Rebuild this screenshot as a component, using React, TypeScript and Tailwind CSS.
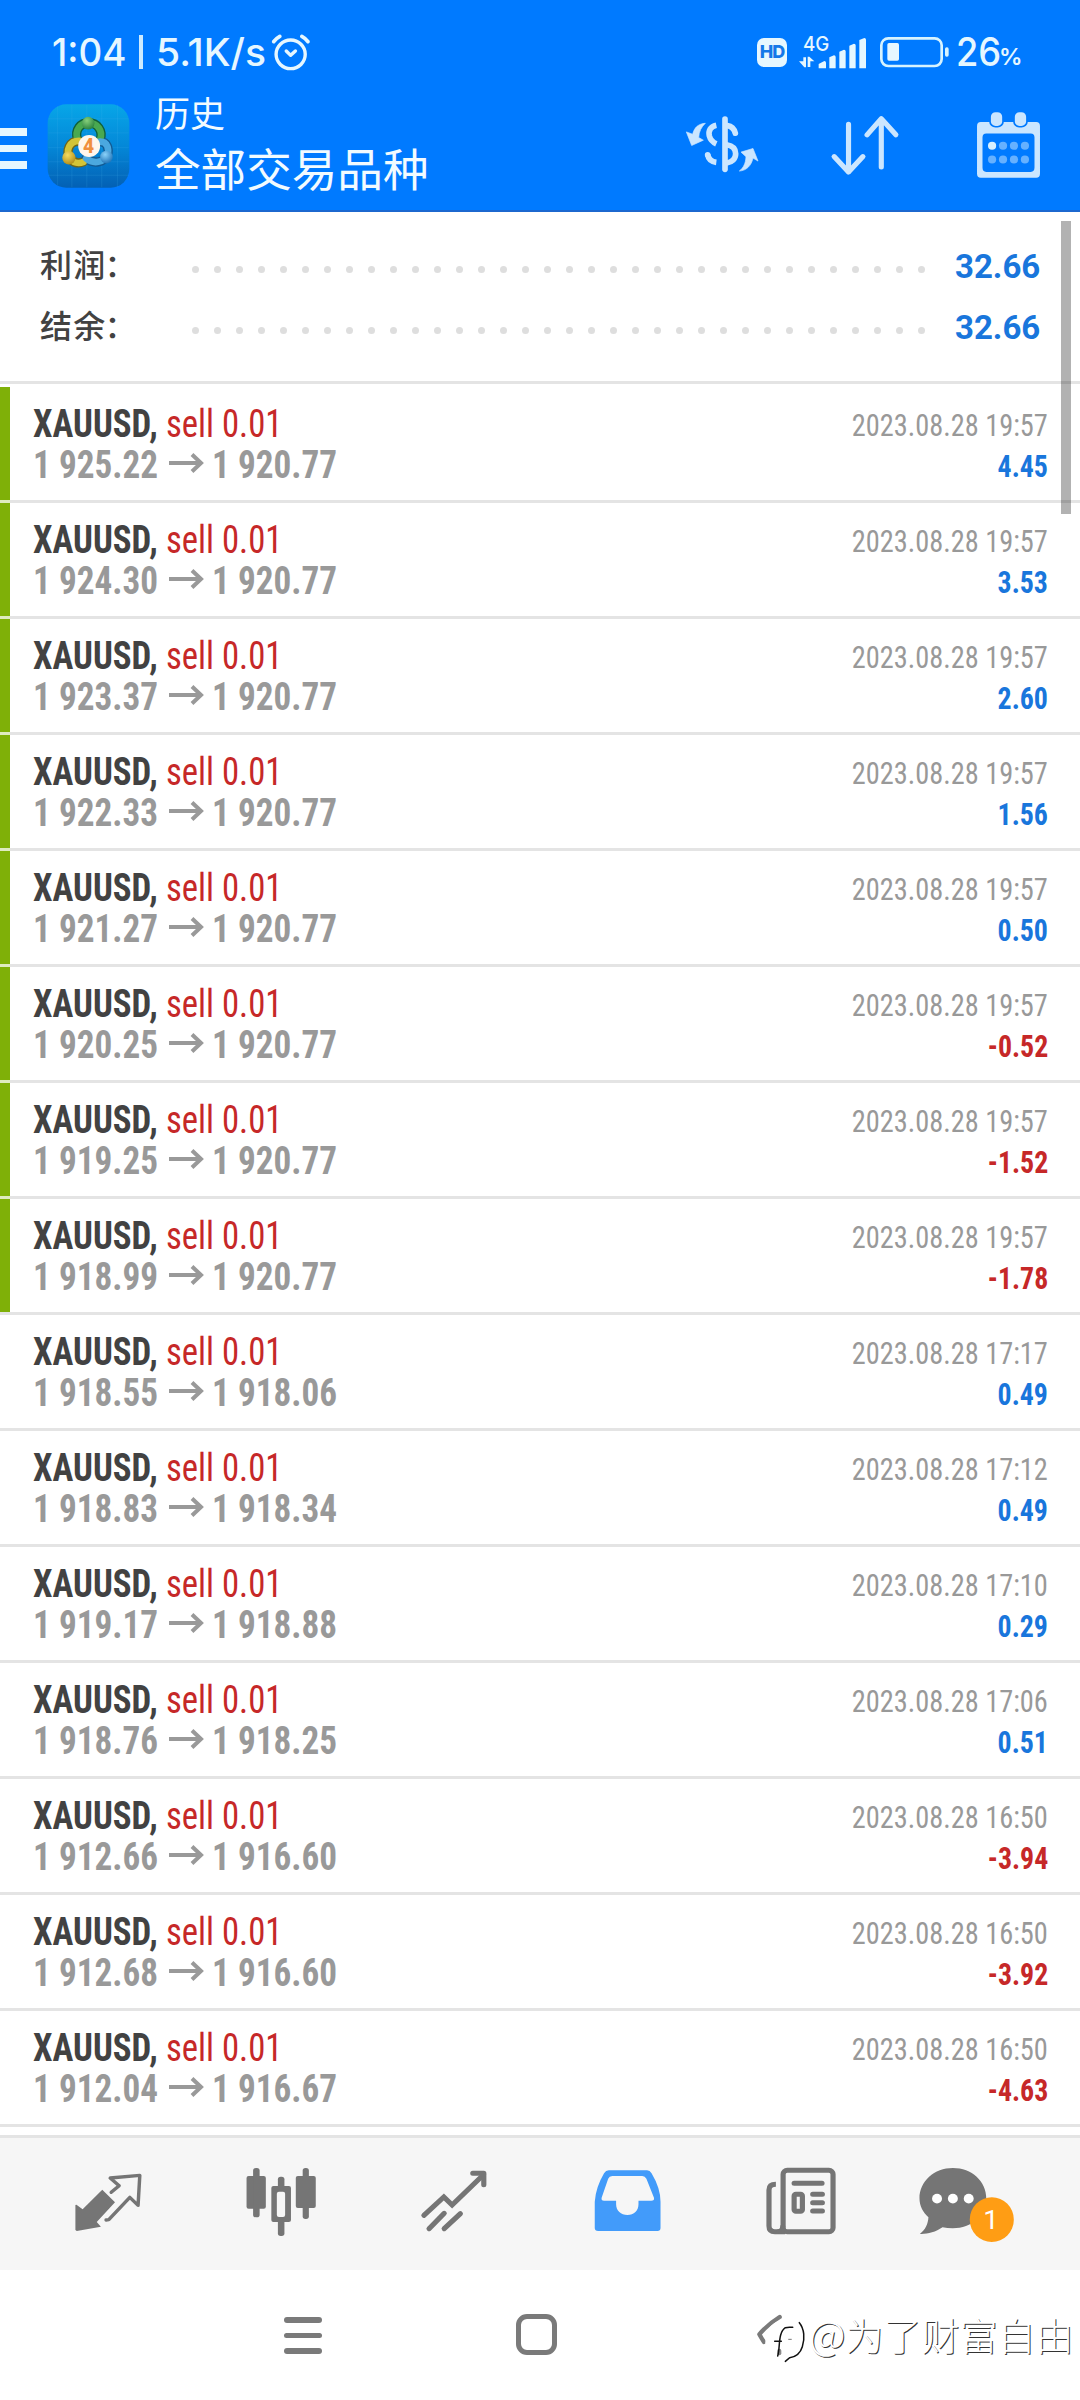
import type { ReactNode } from "react";

type Deal = { from: string; to: string; time: string; profit: string; marked?: boolean };

const deals: Deal[] = [
  { from: "1 925.22", to: "1 920.77", time: "2023.08.28 19:57", profit: "4.45", marked: true },
  { from: "1 924.30", to: "1 920.77", time: "2023.08.28 19:57", profit: "3.53", marked: true },
  { from: "1 923.37", to: "1 920.77", time: "2023.08.28 19:57", profit: "2.60", marked: true },
  { from: "1 922.33", to: "1 920.77", time: "2023.08.28 19:57", profit: "1.56", marked: true },
  { from: "1 921.27", to: "1 920.77", time: "2023.08.28 19:57", profit: "0.50", marked: true },
  { from: "1 920.25", to: "1 920.77", time: "2023.08.28 19:57", profit: "-0.52", marked: true },
  { from: "1 919.25", to: "1 920.77", time: "2023.08.28 19:57", profit: "-1.52", marked: true },
  { from: "1 918.99", to: "1 920.77", time: "2023.08.28 19:57", profit: "-1.78", marked: true },
  { from: "1 918.55", to: "1 918.06", time: "2023.08.28 17:17", profit: "0.49" },
  { from: "1 918.83", to: "1 918.34", time: "2023.08.28 17:12", profit: "0.49" },
  { from: "1 919.17", to: "1 918.88", time: "2023.08.28 17:10", profit: "0.29" },
  { from: "1 918.76", to: "1 918.25", time: "2023.08.28 17:06", profit: "0.51" },
  { from: "1 912.66", to: "1 916.60", time: "2023.08.28 16:50", profit: "-3.94" },
  { from: "1 912.68", to: "1 916.60", time: "2023.08.28 16:50", profit: "-3.92" },
  { from: "1 912.04", to: "1 916.67", time: "2023.08.28 16:50", profit: "-4.63" },
];

function StatusBar() {
  return (
    <div className="flex h-[88px] items-center pt-[16px] font-['Inter',sans-serif] text-[38px] leading-[40px] font-medium text-[#e6f7ff]">
      <span className="ml-[52px] w-[86px] origin-left scale-x-[0.969]">1:04</span>
      <span className="ml-px h-[34px] w-[4px] bg-[#cdebff]" />
      <span className="ml-[13px] w-[115px] origin-left scale-x-[1.027]">5.1K/s</span>
      <svg className="h-[38px] w-[40px]" viewBox="788 98 118 114" preserveAspectRatio="none" fill="none" stroke="#e6f7ff" strokeWidth="10" strokeLinecap="round" strokeLinejoin="round">
        <circle cx="846" cy="162" r="43" />
        <path d="M833 152l13 13 14-13" />
        <path d="M796 124q7-10 18-16M879 108q11 6 18 16" strokeWidth="11" />
      </svg>
      <span className="ml-[446px] flex h-[29px] w-[30px] items-center justify-center rounded-[7px] bg-[#e6f7ff] text-[18px] leading-none font-extrabold tracking-[-1px] text-[#1478e8]">
        HD
      </span>
      <svg className="mb-[4px] ml-[12px] h-[40px] w-[68px]" viewBox="180 16 204 120" preserveAspectRatio="none" fill="#e6f7ff">
        <text x="192" y="79" fontSize="60" fontWeight="500" textLength="79" lengthAdjust="spacingAndGlyphs">4G</text>
        <path d="M180 110l13 0V98h8v30h-5zM226 110h-12v17h-8V96h5z" />
        <path d="M239 118l17-9q5 0 5 5v17h-22zM271 98l14-6q5 0 5 5v34h-19zM301 81l14-6q5 0 5 5v51h-19zM331 63l14-6q5 0 5 5v69h-19zM361 46l15-6q5 0 5 5v86h-20z" />
      </svg>
      <svg className="ml-[12px] h-[32px] w-[72px]" viewBox="420 36 216 96" preserveAspectRatio="none">
        <rect x="427" y="43" width="181" height="83" rx="21" fill="none" stroke="#d6f3ff" strokeWidth="8" />
        <rect x="445" y="57" width="35" height="53" rx="5" fill="#e6f7ff" />
        <rect x="618" y="70" width="11" height="28" rx="5" fill="#d6f3ff" />
      </svg>
      <span className="ml-[5px] w-[43px] origin-left scale-x-[0.93] text-[39px]">26</span>
      <span className="origin-left scale-x-[1.02] pt-[11px] text-[23px] leading-none font-semibold">%</span>
    </div>
  );
}

function AppLogo() {
  return (
    <svg className="ml-[20px] mt-[16px] h-[84px] w-[83px]" viewBox="20 28 250 250" preserveAspectRatio="none">
      <defs>
        <linearGradient id="tile" x1="0" y1="0" x2="0" y2="1">
          <stop offset="0" stopColor="#07a6e8" />
          <stop offset="0.5" stopColor="#0488d8" />
          <stop offset="1" stopColor="#0360b4" />
        </linearGradient>
        <radialGradient id="green" cx="0.4" cy="0.3" r="0.8"><stop offset="0" stopColor="#86d07a" /><stop offset="1" stopColor="#1f7a38" /></radialGradient>
        <radialGradient id="gold" cx="0.4" cy="0.3" r="0.8"><stop offset="0" stopColor="#f5dc60" /><stop offset="1" stopColor="#a98412" /></radialGradient>
        <radialGradient id="sky" cx="0.4" cy="0.3" r="0.8"><stop offset="0" stopColor="#8ad2fa" /><stop offset="1" stopColor="#1469b0" /></radialGradient>
      </defs>
      <rect x="22" y="29" width="246" height="248" rx="56" fill="url(#tile)" />
      <path d="M52 34v236M95 30v246M140 30v246M185 30v246M232 30v246M24 72h242M24 114h242M24 158h242M24 200h242M24 240h242" stroke="#4fb9ee" strokeOpacity="0.25" strokeWidth="2" />
      <g fill="none" strokeLinecap="round">
        <path d="M112 134C102 104 122 84 145 84C172 84 190 108 180 134" stroke="#10603a" strokeWidth="28" />
        <path d="M116 138C88 138 76 166 88 188C98 204 116 206 130 200" stroke="#6b651c" strokeWidth="28" />
        <path d="M180 140C202 140 208 162 202 180C192 202 160 208 138 190" stroke="#125a92" strokeWidth="28" />
        <path d="M112 134C102 104 122 84 145 84C172 84 190 108 180 134" stroke="#49a950" strokeWidth="20" />
        <path d="M116 138C88 138 76 166 88 188C98 204 116 206 130 200" stroke="#d3c437" strokeWidth="20" />
        <path d="M180 140C202 140 208 162 202 180C192 202 160 208 138 190" stroke="#4ba8df" strokeWidth="20" />
      </g>
      <circle cx="144" cy="85" r="19" fill="url(#green)" />
      <circle cx="86" cy="188" r="20" fill="url(#gold)" />
      <circle cx="199" cy="186" r="19" fill="url(#sky)" />
      <circle cx="147" cy="153" r="33" fill="#fff6ec" />
      <text x="145" y="174" textAnchor="middle" fontSize="58" fontWeight="800" fontFamily="Roboto, sans-serif" fill="#f08f3e">4</text>
    </svg>
  );
}

function Toolbar() {
  return (
    <div className="flex h-[124px] items-start border-b-2 border-[#1c68cf]">
      <div className="mt-[40px] flex w-[27px] flex-col gap-[9px]">
        <span className="h-[7.5px] bg-[#e6f7ff]" />
        <span className="h-[7.5px] bg-[#e6f7ff]" />
        <span className="h-[7.5px] bg-[#e6f7ff]" />
      </div>
      <AppLogo />
      <div className="ml-[25px] pt-[6px] font-['Noto_Sans_CJK_SC',sans-serif] whitespace-nowrap text-[#f2fbff]">
        <div className="text-[35px] leading-[36px]">历史</div>
        <div className="mt-[12px] text-[45.6px] leading-[50px]">全部交易品种</div>
      </div>
      <svg className="mt-[27px] ml-auto h-[58px] w-[75px]" viewBox="15 45 225 175" preserveAspectRatio="none" fill="none" stroke="#cbe6ff" strokeWidth="17">
        <path d="M135 57V209" strokeLinecap="round" />
        <path d="M109 76C90 80 85 93 88 108C91 120 100 128 109 132M109 188C93 186 85 178 83 164" />
        <path d="M83 166v-1M142 77C156 79 163 88 166 100" strokeLinecap="round" />
        <path d="M140 135C158 138 167 148 167 162C167 177 156 187 140 190" />
        <path d="M76 70C55 72 43 82 38 103L19 96L35 137L70 121L56 113C57 95 64 81 76 70Z" fill="#cbe6ff" stroke="#cbe6ff" strokeWidth="2" />
        <path d="M178 214C191 204 197 190 198 171L183 157L219 146L234 184L219 175C214 198 199 213 178 214Z" fill="#cbe6ff" stroke="#cbe6ff" strokeWidth="2" />
      </svg>
      <svg className="mt-[27px] ml-[70px] h-[61px] w-[70px]" viewBox="842 345 204 182" preserveAspectRatio="none" fill="none" stroke="#cbe6ff" strokeWidth="15" strokeLinecap="round" strokeLinejoin="round">
        <path d="M896 373V515M854 469L896 515L938 469M991.5 500V356M950 404L991.5 356L1034 404" />
      </svg>
      <svg className="mt-[23px] mr-[39px] ml-[76px] h-[67px] w-[65px]" viewBox="1265 333 190 200" preserveAspectRatio="none">
        <path fillRule="evenodd" fill="#cbe6ff" d="M1279 366H1441Q1452 366 1452 378V520Q1452 532 1441 532H1279Q1268 532 1268 520V378Q1268 366 1279 366ZM1295 400Q1284 400 1284 412V502Q1284 515 1295 515H1425Q1436 515 1436 502V412Q1436 400 1425 400Z" />
        <rect x="1306" y="334" width="38" height="46" rx="16" fill="#cbe6ff" stroke="#007aff" strokeWidth="5" />
        <rect x="1376" y="334" width="38" height="46" rx="16" fill="#cbe6ff" stroke="#007aff" strokeWidth="5" />
        <circle cx="1312" cy="437" r="12" fill="#d8f0ff" />
        <g fill="#66b1ff">
          <circle cx="1344" cy="437" r="12" /><circle cx="1376" cy="437" r="12" /><circle cx="1408" cy="437" r="12" />
          <circle cx="1312" cy="478" r="12" /><circle cx="1344" cy="478" r="12" /><circle cx="1376" cy="478" r="12" /><circle cx="1408" cy="478" r="12" />
        </g>
      </svg>
    </div>
  );
}

function SummaryRow({ label, value }: { label: string; value: string }) {
  return (
    <div className="flex h-[61px] items-center pl-[40px]">
      <span className="mb-[5px] w-[152px] font-['Noto_Sans_CJK_SC',sans-serif] text-[32px] leading-[40px] font-medium tracking-[1.2px] text-[#424242]">
        {label}
        <span className="-ml-[2px]">：</span>
      </span>
      <div className="mt-[8px] flex w-[733px] justify-between">
        {Array.from({ length: 34 }, (_, i) => (
          <span key={i} className="size-[7px] rounded-full bg-[#dedede]" />
        ))}
      </div>
      <span className="mt-[2px] ml-[30px] text-[33px] leading-[40px] font-bold text-[#1976dc]">{value}</span>
    </div>
  );
}

function DealRow({ deal, joined }: { deal: Deal; joined: boolean }) {
  return (
    <div className="h-[116px]">
      <div className="flex h-[113px] whitespace-nowrap">
        <div className={deal.marked ? "w-[10px] bg-[#7fb008]" : "w-[10px]"} />
        <div className="ml-[23px] pt-[16px] text-[38.5px] leading-[41px]">
          <div className="flex">
            <span className="w-[133px] origin-left scale-x-[0.905] font-bold text-[#424242]">XAUUSD,</span>
            <span className="origin-left scale-x-[0.9] text-[#c62828]">sell 0.01</span>
          </div>
          <div className="flex font-bold text-[#999999]">
            <span className="w-[135px] origin-left scale-x-[0.914]">{deal.from}</span>
            <svg className="mt-[8px] h-[22px] w-[36px]" viewBox="0 0 36 22" fill="none" stroke="#999999" strokeWidth="4">
              <path d="M1 11H33M24 2.500L33 11L24 19.500" />
            </svg>
            <span className="ml-[8px] origin-left scale-x-[0.914]">{deal.to}</span>
          </div>
        </div>
        <div className="mr-[32px] ml-auto flex flex-col items-end pt-[18px] text-[31.5px] leading-[41px]">
          <span className="origin-right scale-x-[0.9] text-[#999999]">{deal.time}</span>
          <span className={deal.profit.startsWith("-") ? "origin-right scale-x-[0.885] font-bold text-[#c62828]" : "origin-right scale-x-[0.885] font-bold text-[#1976dc]"}>
            {deal.profit}
          </span>
        </div>
      </div>
      <div className="flex h-[3px] bg-[#e4e4e4]">{joined && <span className="w-[10px] bg-[#deebc0]" />}</div>
    </div>
  );
}

function Tab({ viewBox, children }: { viewBox: string; children: ReactNode }) {
  return (
    <svg className="mt-[27px] h-[80px] w-[173px]" viewBox={viewBox} preserveAspectRatio="none">
      {children}
    </svg>
  );
}

function TabBar() {
  return (
    <div className="flex h-[135px] items-start border-t-[3px] border-[#e4e4e4] bg-[#f6f6f6] pl-[22px]">
      <Tab viewBox="63.9 195 502.4 240">
        <path d="M297 269L334 307L281 366L293 380L223 393L219 390V315L222 314L240 328Z" fill="#757575" />
        <path d="M323 277L346 257L320 234L406 226L401 316L377 292L316 359L308 360" fill="none" stroke="#757575" strokeWidth="10" strokeLinejoin="round" strokeLinecap="round" />
      </Tab>
      <Tab viewBox="566.3 195 502.4 240">
        <g fill="#757575">
          <rect x="716" y="228" width="56" height="98" rx="6" /><rect x="735" y="204" width="19" height="148" rx="8" />
          <rect x="859" y="228" width="58" height="96" rx="6" /><rect x="879" y="204" width="18" height="153" rx="8" />
          <rect x="788" y="258" width="57" height="108" rx="6" /><rect x="807" y="230" width="19" height="178" rx="8" />
        </g>
        <rect x="804" y="275" width="24" height="76" rx="6" fill="#f6f6f6" />
      </Tab>
      <Tab viewBox="1068.7 195 502.4 240">
        <path d="M1231 346L1289 291L1313 315L1404 224M1246 386L1290 340M1290 386L1337 341" fill="none" stroke="#757575" strokeWidth="15" strokeLinecap="round" strokeLinejoin="miter" />
        <path d="M1373 220H1405V254" fill="none" stroke="#757575" strokeWidth="15" strokeLinecap="round" strokeLinejoin="round" />
      </Tab>
      <Tab viewBox="2.9 195 502.4 240">
        <path fillRule="evenodd" fill="#429bfa" d="M200 211H311Q319 211 324 220Q350 265 350 305V384Q350 393 341 393H169Q159 393 159 384V305Q162 262 186 220Q191 211 200 211ZM210 228Q201 228 198 236L179 293Q177 302 186 302H221V313C221 333 235 345 254 345C273 345 286 333 286 313V302H323Q333 302 331 293L309 236Q305 228 297 228Z" />
      </Tab>
      <Tab viewBox="505.3 195 502.4 240">
        <g fill="none" stroke="#757575" strokeWidth="15" strokeLinejoin="round">
          <rect x="706" y="211" width="145" height="184" rx="12" />
          <path d="M685 253Q665 253 665 270V378Q665 395 682 395H712" />
          <path d="M705 380Q705 392 695 394M738 250H819M792 283H820M792 308H820M792 333H820" strokeLinecap="round" />
          <rect x="738" y="283" width="24" height="51" rx="5" />
        </g>
      </Tab>
      <Tab viewBox="1007.7 195 502.4 240">
        <path fill="#757575" d="M1199 204C1254 204 1296 244 1296 295C1296 346 1254 385 1199 385C1188 385 1178 384 1169 382C1148 397 1124 403 1103 402C1119 390 1127 372 1128 352C1112 337 1102 318 1102 295C1102 244 1145 204 1199 204Z" />
        <circle cx="1153" cy="296" r="14.5" fill="#fff" /><circle cx="1199" cy="296" r="14.5" fill="#fff" /><circle cx="1245" cy="296" r="14.5" fill="#fff" />
        <ellipse cx="1312" cy="359" rx="64" ry="67" fill="#ff9d14" />
        <text x="1310" y="386" textAnchor="middle" fontSize="80" fontFamily="Roboto, sans-serif" fill="#fff">1</text>
      </Tab>
    </div>
  );
}

function SystemNav() {
  return (
    <div className="flex h-[130px] items-start bg-white">
      <div className="mt-[47px] ml-[284px] flex w-[38px] flex-col gap-[10px]">
        <span className="h-[5.5px] rounded-full bg-[#7a7a7a]" />
        <span className="h-[5.5px] rounded-full bg-[#7a7a7a]" />
        <span className="h-[5.5px] rounded-full bg-[#7a7a7a]" />
      </div>
      <div className="mt-[44px] ml-[194px] size-[41px] rounded-[11px] border-[5px] border-[#7a7a7a]" />
      <svg className="mt-[42px] ml-[197px] h-[52px] w-[54px]" viewBox="42 36 162 156" fill="none" strokeLinecap="round">
        <path d="M119 51Q82 74 58 103Q64 114 72 126" stroke="#7a7a7a" strokeWidth="13" strokeLinejoin="round" />
        <path d="M118 152v8" stroke="#8a8a8a" strokeWidth="12" />
        <path d="M81 130Q84 66 140 64Q178 68 182 100" stroke="#fff" strokeWidth="11" />
        <path d="M104 124H124M113 168C121 145 113 98 136 83Q142 81 158 82M178 68C193 86 195 116 187 140C180 163 163 171 149 173L136 184" stroke="#111" strokeWidth="4.5" />
        <path d="M146 118h8" stroke="#777" strokeWidth="3" />
      </svg>
      <span className="mt-[36px] ml-px font-['Noto_Sans_CJK_SC',sans-serif] text-[38px] leading-[54px] font-light whitespace-nowrap text-white [text-shadow:1px_1px_0_#333]">
        <span className="text-[40px]">@</span>为了财富自由
      </span>
    </div>
  );
}

export default function App() {
  return (
    <div className="relative h-[2400px] w-[1080px] overflow-hidden bg-white font-['Roboto',sans-serif]">
      <header className="bg-[#007aff]">
        <StatusBar />
        <Toolbar />
      </header>
      <section className="h-[172px] border-b-[3px] border-[#e4e4e4] pt-[23px]">
        <SummaryRow label="利润" value="32.66" />
        <SummaryRow label="结余" value="32.66" />
      </section>
      <main className="h-[1751px] pt-[3px] font-['Roboto_Condensed','Roboto',sans-serif]">
        {deals.map((deal, i) => (
          <DealRow key={i} deal={deal} joined={Boolean(deal.marked && deals[i + 1]?.marked)} />
        ))}
      </main>
      <TabBar />
      <SystemNav />
      <div className="absolute top-[221px] right-[9px] h-[293px] w-[10px] bg-black/30" />
    </div>
  );
}
